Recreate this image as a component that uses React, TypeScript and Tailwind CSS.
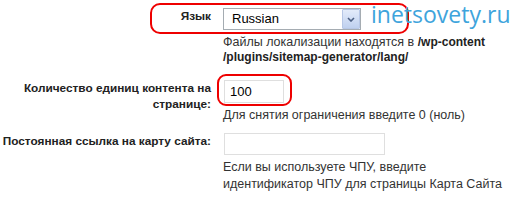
import React from "react";

export default function App() {
  return (
    <div className="relative w-[513px] h-[203px] bg-white overflow-hidden text-[#333]" style={{ fontFamily: '"Liberation Sans", Arial, sans-serif' }}>
      <div className="grid grid-cols-[211px_1fr] gap-x-[12px] pt-[8px]">
        {/* Row 1 */}
        <div className="text-right text-[11.8px] font-bold leading-[16px] text-[#222] whitespace-nowrap">Язык</div>
        <div>
          <div className="relative w-[138px] h-[22px] border border-[#a5acb2] bg-white flex items-center">
            <span className="pl-[8px] text-[13px] text-black">Russian</span>
            <div className="absolute right-0 top-0 w-[18px] h-[20px] border border-[#b7c7e6] bg-gradient-to-b from-[#e3ebfa] to-[#bfd0ef] flex items-center justify-center rounded-[1px]">
              <svg width="8" height="5" viewBox="0 0 8 5">
                <path d="M1 1 L4 4 L7 1" stroke="#4d6185" strokeWidth="1.6" fill="none" />
              </svg>
            </div>
          </div>
          <div className="mt-[5px] text-[12.5px] leading-[15px] whitespace-nowrap">
            Файлы локализации находятся в <b className="text-[#222] text-[12px]">/wp-content</b>
            <br />
            <b className="text-[#222] text-[12px]">/plugins/sitemap-generator/lang/</b>
          </div>
        </div>

        {/* Row 2 */}
        <div className="mt-[15px] text-right text-[11.8px] font-bold leading-[16px] text-[#222] whitespace-nowrap">
          Количество единиц контента на
          <br />
          странице:
        </div>
        <div className="mt-[15px]">
          <div className="ml-[1px] w-[60px] h-[23px] border border-[#dfdfdf] flex items-center pl-[5px] text-[13px] text-black">100</div>
          <div className="mt-[4px] text-[12.5px] leading-[16px] whitespace-nowrap">Для снятия ограничения введите 0 (ноль)</div>
        </div>

        {/* Row 3 */}
        <div className="mt-[10px] text-right text-[11.8px] font-bold leading-[16px] text-[#222] whitespace-nowrap">Постоянная ссылка на карту сайта:</div>
        <div className="mt-[10px]">
          <div className="ml-[1px] w-[161px] h-[22px] border border-[#dfdfdf]"></div>
          <div className="mt-[4px] text-[12.5px] leading-[17px] whitespace-nowrap">
            Если вы используете ЧПУ, введите
            <br />
            идентификатор ЧПУ для страницы Карта Сайта
          </div>
        </div>
      </div>

      {/* Highlights */}
      <div className="absolute left-[150px] top-[3px] w-[259px] h-[31px] border-2 border-[#ee0000] rounded-[10px] pointer-events-none"></div>
      <div className="absolute left-[217px] top-[74px] w-[75px] h-[32px] border-2 border-[#ee0000] rounded-[9px] pointer-events-none"></div>

      {/* Watermark */}
      <div className="absolute left-[371px] top-[-1px] text-[23px] leading-[30px] text-[#3ea4dc] whitespace-nowrap" style={{ fontFamily: '"Open Sans", "Noto Sans", sans-serif' }}>
        inetsovety.ru
      </div>
    </div>
  );
}
